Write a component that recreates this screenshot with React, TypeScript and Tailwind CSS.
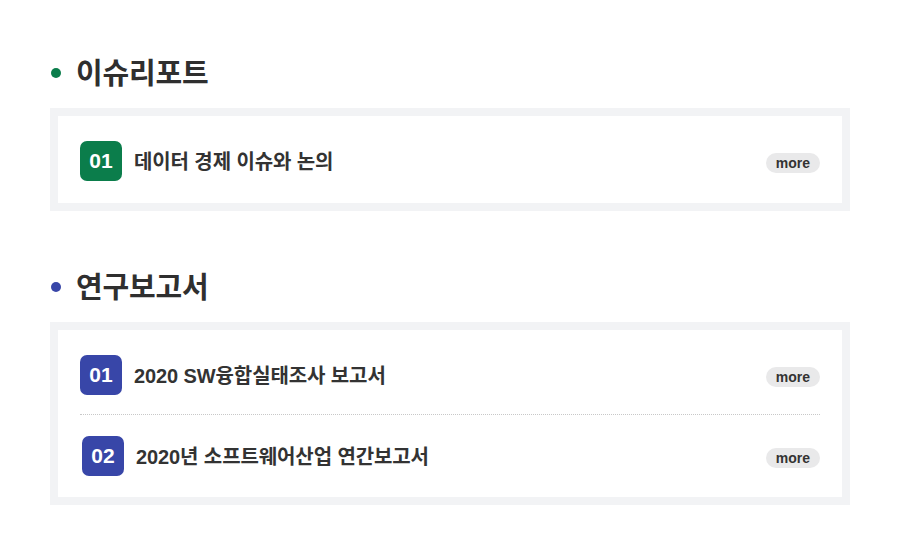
const FONT = "font-['Liberation_Sans','Noto_Sans_CJK_KR',sans-serif]"

type TItem = {
  no: string
  title: string
  shift?: boolean
}

const MoreButton = () => (
  <button className="mt-[4px] h-[20px] rounded-full bg-[#e9e9ea] px-[10px] text-[14px] font-bold leading-[20px] text-[#333]">
    more
  </button>
)

const Row = ({ item, color }: { item: TItem; color: string }) => (
  <div className={`flex items-center ${item.shift ? "pl-[2px]" : ""}`}>
    <span
      className={`flex h-[40px] w-[42px] shrink-0 items-center justify-center rounded-[7px] text-[21px] font-bold text-white ${color}`}
    >
      {item.no}
    </span>
    <span className="ml-[12px] flex-1 pt-[2px] text-[20px] font-bold tracking-[-0.1px] text-[#333]">
      {item.title}
    </span>
    <MoreButton />
  </div>
)

const Section = ({
  title,
  dot,
  badge,
  items,
}: {
  title: string
  dot: string
  badge: string
  items: TItem[]
}) => (
  <section>
    <h2 className="flex h-[40px] items-center">
      <span className={`ml-[1px] h-[10px] w-[10px] rounded-full ${dot}`} />
      <span className="ml-[15px] pt-[4px] text-[29px] font-bold tracking-[-0.2px] text-[#2f2f2f]">
        {title}
      </span>
    </h2>
    <div className="mt-[15px] border-[8px] border-[#f2f3f5] bg-white px-[22px]">
      {items.map((item, i) => (
        <div
          key={item.no}
          className={
            i === 0
              ? items.length > 1
                ? "pb-[19px] pt-[25px]"
                : "pb-[22px] pt-[25px]"
              : "border-t border-dotted border-[#c8c8c8] pb-[21px] pt-[21px]"
          }
        >
          <Row item={item} color={badge} />
        </div>
      ))}
    </div>
  </section>
)

export default function App() {
  return (
    <div className={`h-[555px] w-[900px] bg-white px-[50px] pt-[53px] ${FONT}`}>
      <Section
        title="이슈리포트"
        dot="bg-[#0b7d4b]"
        badge="bg-[#0b7d4b]"
        items={[{ no: "01", title: "데이터 경제 이슈와 논의" }]}
      />
      <div className="h-[56px]" />
      <Section
        title="연구보고서"
        dot="bg-[#3846a8]"
        badge="bg-[#3846a8]"
        items={[
          { no: "01", title: "2020 SW융합실태조사 보고서" },
          { no: "02", title: "2020년 소프트웨어산업 연간보고서", shift: true },
        ]}
      />
    </div>
  )
}
